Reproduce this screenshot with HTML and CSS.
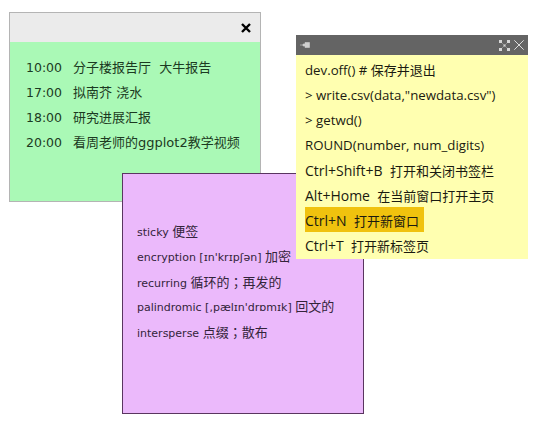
FILE: index.html
```html
<!DOCTYPE html>
<html lang="zh">
<head>
    <meta charset="UTF-8">
    <meta name="viewport" content="width=device-width, initial-scale=1.0">
    <title>便签</title>
    <link rel="stylesheet" href="styles.css">
</head>
<body>
    <div class="note note-green">
        <div class="green-bar">
            <svg class="green-close" viewBox="0 0 10 10" width="10" height="10">
                <path d="M1 1 L9 9 M9 1 L1 9" stroke="#000" stroke-width="2.4" fill="none"/>
            </svg>
        </div>
        <ul class="green-list">
            <li><span class="time">10:00</span>分子楼报告厅&nbsp;&nbsp;大牛报告</li>
            <li><span class="time">17:00</span>拟南芥 浇水</li>
            <li><span class="time">18:00</span>研究进展汇报</li>
            <li><span class="time">20:00</span>看周老师的ggplot2教学视频</li>
        </ul>
    </div>

    <div class="note note-purple">
        <ul class="purple-list">
            <li>sticky <span class="zh">便签</span></li>
            <li>encryption [ɪn'krɪpʃən] <span class="zh">加密</span></li>
            <li>recurring <span class="zh">循环的<span class="punct" lang="zh-Hant-TW">；</span>再发的</span></li>
            <li>palindromic [,pælɪn'drɒmɪk] <span class="zh">回文的</span></li>
            <li>intersperse <span class="zh">点缀<span class="punct" lang="zh-Hant-TW">；</span>散布</span></li>
        </ul>
    </div>

    <div class="note note-yellow">
        <div class="yellow-bar">
            <svg class="pin" viewBox="0 0 10 6" width="10" height="6">
                <path d="M0 3 H3 M3 2 H5 V0.5 H9.5 V5.5 H5 V4 H3 Z" fill="#cfcfcf" stroke="#cfcfcf" stroke-width="0.6"/>
            </svg>
            <div class="bar-icons">
                <svg viewBox="0 0 11 11" width="11" height="11">
                    <path d="M2 2 L9 9 M9 2 L2 9" stroke="#8c8c8c" stroke-width="1"/>
                    <g fill="#d8d8d8">
                        <rect x="0" y="0" width="3" height="3"/>
                        <rect x="8" y="0" width="3" height="3"/>
                        <rect x="0" y="8" width="3" height="3"/>
                        <rect x="8" y="8" width="3" height="3"/>
                        <rect x="4.5" y="4.5" width="2" height="2"/>
                    </g>
                </svg>
                <svg viewBox="0 0 10 10" width="10" height="10">
                    <path d="M0.3 0.3 L9.7 9.7 M9.7 0.3 L0.3 9.7" stroke="#dcdcdc" stroke-width="1" fill="none"/>
                </svg>
            </div>
        </div>
        <ul class="yellow-list">
            <li>dev.off() # <span class="zh">保存并退出</span></li>
            <li>&gt; write.csv(data,"newdata.csv")</li>
            <li>&gt; getwd()</li>
            <li>ROUND(number, num_digits)</li>
            <li><span class="key">Ctrl+Shift+B&nbsp;&nbsp;</span><span class="zh">打开和关闭书签栏</span></li>
            <li><span class="key">Alt+Home&nbsp;&nbsp;</span><span class="zh">在当前窗口打开主页</span></li>
            <li class="mark"><span class="key">Ctrl+N&nbsp;&nbsp;</span><span class="zh">打开新窗口</span></li>
            <li><span class="key">Ctrl+T&nbsp;&nbsp;</span><span class="zh">打开新标签页</span></li>
        </ul>
    </div>
</body>
</html>
```

FILE: styles.css
```css
body {
    margin: 0;
    width: 540px;
    height: 425px;
    overflow: hidden;
    position: relative;
    background: #ffffff;
}
ul {
    list-style: none;
    margin: 0;
    padding: 0;
}
.note {
    position: absolute;
    box-sizing: border-box;
}
.zh {
    font-size: 13px;
}
.punct {
    font-family: "Noto Sans CJK TC", sans-serif;
}
.note-green {
    left: 9px;
    top: 12px;
    width: 252px;
    height: 190px;
    background: #aaf9b6;
    border: 1px solid #b4b4b4;
}
.green-bar {
    height: 29px;
    background: #ebebeb;
    display: flex;
    justify-content: flex-end;
    align-items: center;
    padding-right: 9px;
}
.green-list {
    padding: 13px 0 0 16px;
    font-family: "DejaVu Sans", "Noto Sans CJK SC", sans-serif;
    font-size: 13px;
    color: #1c3a22;
}
.green-list li {
    height: 25px;
    line-height: 25px;
    white-space: nowrap;
}
.time {
    display: inline-block;
    width: 47px;
    font-size: 12.5px;
}
.note-purple {
    left: 122px;
    top: 173px;
    width: 242px;
    height: 241px;
    background: #ebb9fb;
    border: 1px solid #5a3560;
}
.purple-list {
    padding: 45px 0 0 14px;
    font-family: "DejaVu Sans", "Noto Sans CJK SC", sans-serif;
    font-size: 11px;
    color: #33243a;
}
.purple-list li {
    height: 25px;
    line-height: 25px;
    white-space: nowrap;
}
.note-yellow {
    left: 296px;
    top: 35px;
    width: 232px;
    height: 224px;
    background: #ffffb0;
}
.yellow-bar {
    height: 20px;
    background: #646464;
    display: flex;
    justify-content: space-between;
    align-items: center;
    padding: 0 4px;
}
.bar-icons {
    display: flex;
    gap: 4px;
    align-items: center;
}
.yellow-list {
    padding: 3px 0 0 9px;
    font-family: "Open Sans", "Noto Sans CJK SC", sans-serif;
    font-size: 13.25px;
    color: #1a1a10;
}
.yellow-list li {
    height: 25px;
    line-height: 25px;
    white-space: nowrap;
}
.key {
    font-size: 14px;
}
.yellow-list .mark {
    width: fit-content;
    margin-top: -1px;
    margin-bottom: 1px;
    padding-right: 5px;
    line-height: 27px;
    background: #f0c20e;
}
```
